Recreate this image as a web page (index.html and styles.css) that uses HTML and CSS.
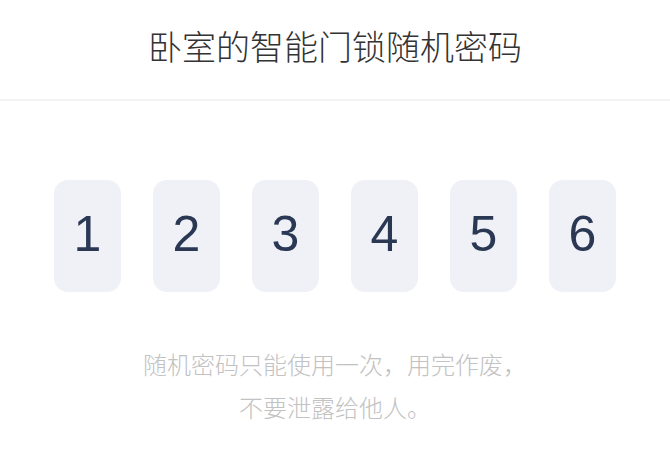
FILE: index.html
```html
<!DOCTYPE html>
<html lang="zh">
<head>
<meta charset="utf-8">
<link rel="stylesheet" href="styles.css">
</head>
<body>
<div class="page">
  <header class="header">
    <h1 class="title">卧室的智能门锁随机密码</h1>
  </header>
  <div class="code">
    <div class="digit">1</div>
    <div class="digit">2</div>
    <div class="digit">3</div>
    <div class="digit">4</div>
    <div class="digit">5</div>
    <div class="digit">6</div>
  </div>
  <p class="note">随机密码只能使用一次，用完作废，<br>不要泄露给他人。</p>
</div>
</body>
</html>
```

FILE: styles.css
```css
html, body {
  margin: 0;
  padding: 0;
  background: #ffffff;
}
.page {
  width: 670px;
  height: 470px;
  display: flex;
  flex-direction: column;
  align-items: center;
  font-family: "Noto Sans CJK SC", "Liberation Sans", sans-serif;
}
.header {
  width: 100%;
  height: 101px;
  padding-bottom: 8px;
  box-sizing: border-box;
  border-bottom: 2px solid #f4f4f4;
  display: flex;
  align-items: center;
  justify-content: center;
}
.title {
  margin: 0;
  font-size: 34px;
  font-weight: 300;
  color: #333333;
  line-height: 1;
}
.code {
  margin-top: 79px;
  display: flex;
  gap: 32px;
}
.digit {
  width: 67px;
  height: 112px;
  border-radius: 14px;
  background: #eff1f7;
  display: flex;
  align-items: center;
  justify-content: center;
  font-family: "Liberation Sans", Arial, sans-serif;
  font-size: 50px;
  color: #2a3854;
  padding-bottom: 4px;
  box-sizing: border-box;
}
.note {
  margin: 50px 0 0;
  font-size: 24px;
  font-weight: 300;
  line-height: 43px;
  color: #c2c2c2;
  text-align: center;
}
```
